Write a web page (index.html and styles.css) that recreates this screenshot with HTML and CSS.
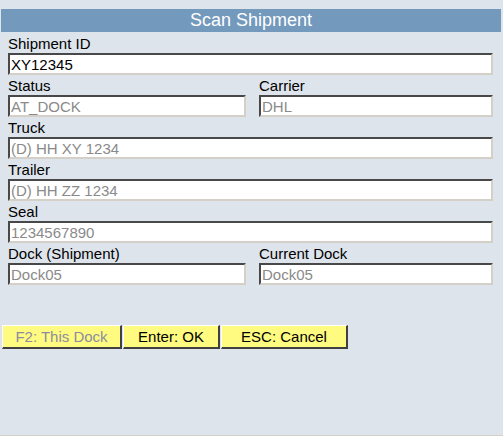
FILE: index.html
```html
<!DOCTYPE html>
<html>
<head>
<meta charset="utf-8">
<link rel="stylesheet" href="styles.css">
</head>
<body>
<div class="page">
  <div class="title">Scan Shipment</div>
  <div class="form">
    <div class="field">
      <label class="lbl">Shipment ID</label>
      <input class="inp active" type="text" value="XY12345">
    </div>
    <div class="row">
      <div class="field">
        <label class="lbl">Status</label>
        <input class="inp" type="text" value="AT_DOCK" readonly>
      </div>
      <div class="field">
        <label class="lbl">Carrier</label>
        <input class="inp" type="text" value="DHL" readonly>
      </div>
    </div>
    <div class="field">
      <label class="lbl">Truck</label>
      <input class="inp" type="text" value="(D) HH XY 1234" readonly>
    </div>
    <div class="field">
      <label class="lbl">Trailer</label>
      <input class="inp" type="text" value="(D) HH ZZ 1234" readonly>
    </div>
    <div class="field">
      <label class="lbl">Seal</label>
      <input class="inp" type="text" value="1234567890" readonly>
    </div>
    <div class="row">
      <div class="field">
        <label class="lbl">Dock (Shipment)</label>
        <input class="inp" type="text" value="Dock05" readonly>
      </div>
      <div class="field">
        <label class="lbl">Current Dock</label>
        <input class="inp" type="text" value="Dock05" readonly>
      </div>
    </div>
  </div>
  <div class="buttons">
    <button class="btn btn-f2 disabled" type="button">F2: This Dock</button>
    <button class="btn btn-ok" type="button">Enter: OK</button>
    <button class="btn btn-esc" type="button">ESC: Cancel</button>
  </div>
</div>
</body>
</html>
```

FILE: styles.css
```css
html, body {
  margin: 0;
  padding: 0;
  height: 100%;
}
body {
  background: #dde4eb;
  font-family: "Liberation Sans", Arial, sans-serif;
  font-size: 15px;
  color: #000;
}
.page {
  box-sizing: border-box;
  height: 436px;
  padding-top: 9px;
  border-bottom: 1px solid #d4d0c8;
}
.title {
  margin: 0 2px 1px 1px;
  height: 23px;
  line-height: 23px;
  background: #7399bd;
  color: #fff;
  text-align: center;
  font-size: 18px;
}
.form {
  padding: 0 10px 0 8px;
}
.row {
  display: grid;
  grid-template-columns: 238px 1fr;
  column-gap: 13px;
}
.field {
  display: flex;
  flex-direction: column;
}
.lbl {
  display: block;
  padding-top: 2px;
  height: 18px;
  line-height: 18px;
}
.inp {
  box-sizing: border-box;
  width: 100%;
  height: 22px;
  margin: 0;
  padding: 0 0 0 1px;
  background: #fff;
  border-style: solid;
  border-width: 2px;
  border-color: #484848 #d4d0c8 #d4d0c8 #484848;
  font-family: "Liberation Sans", Arial, sans-serif;
  font-size: 15px;
  color: #8a8a8a;
  outline: none;
}
.inp.active {
  color: #000;
}
.buttons {
  display: flex;
  gap: 1px;
  padding: 40px 0 0 2px;
}
.btn {
  box-sizing: border-box;
  height: 24px;
  margin: 0;
  padding: 0;
  background: #fffa80;
  border-style: solid;
  border-width: 1px 2px 2px 1px;
  border-color: #ffffff #404040 #404040 #ffffff;
  font-family: "Liberation Sans", Arial, sans-serif;
  font-size: 15px;
  font-weight: normal;
  color: #000;
  line-height: 20px;
}
.btn.disabled {
  color: #8c8ca0;
}
.btn-f2 {
  width: 120px;
}
.btn-ok {
  width: 97px;
}
.btn-esc {
  width: 127px;
}
```
